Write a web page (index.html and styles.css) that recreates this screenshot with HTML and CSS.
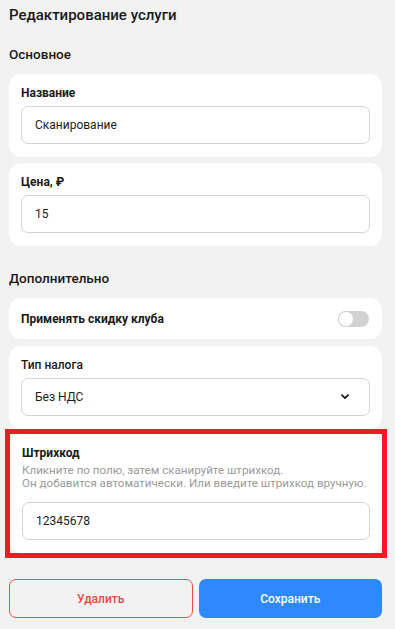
FILE: index.html
```html
<!DOCTYPE html>
<html lang="ru">
<head>
<meta charset="utf-8">
<title>Редактирование услуги</title>
<link rel="stylesheet" href="styles.css">
</head>
<body>
<div class="page">
  <h1 class="title">Редактирование услуги</h1>

  <h2 class="section">Основное</h2>
  <div class="cards">
    <div class="card">
      <div class="label">Название</div>
      <div class="field">Сканирование</div>
    </div>
    <div class="card">
      <div class="label">Цена, ₽</div>
      <div class="field">15</div>
    </div>
  </div>

  <h2 class="section section-2">Дополнительно</h2>
  <div class="cards">
    <div class="card card-row">
      <div class="label label-inline">Применять скидку клуба</div>
      <div class="toggle"><span class="knob"></span></div>
    </div>
    <div class="card card-4">
      <div class="label label-medium">Тип налога</div>
      <div class="field field-select">
        <span>Без НДС</span>
        <svg class="chevron" width="8" height="6" viewBox="0 0 8 6"><path d="M1 1.2 L4 4.2 L7 1.2" fill="none" stroke="#1a1a1a" stroke-width="1.8" stroke-linecap="round" stroke-linejoin="round"/></svg>
      </div>
    </div>
    <div class="highlight">
      <div class="card">
        <div class="label">Штрихкод</div>
        <div class="hint">Кликните по полю, затем сканируйте штрихкод.<br>Он добавится автоматически. Или введите штрихкод вручную.</div>
        <div class="field field-barcode">12345678</div>
      </div>
    </div>
  </div>

  <div class="actions">
    <button class="btn btn-delete">Удалить</button>
    <button class="btn btn-save">Сохранить</button>
  </div>
</div>
</body>
</html>
```

FILE: styles.css
```css
* { box-sizing: border-box; }
html, body { margin: 0; padding: 0; }
body {
  background: #f2f2f2;
  font-family: Roboto, "Noto Sans", sans-serif;
  color: #1a1a1a;
}
.page {
  padding: 5px 13px 0 9px;
}
.title {
  margin: 0;
  font-size: 15px;
  line-height: 20px;
  font-weight: 500;
}
.section {
  margin: 19px 0 10px;
  font-size: 13.5px;
  line-height: 20px;
  font-weight: 500;
}
.section-2 { margin-top: 22px; }
.cards {
  display: flex;
  flex-direction: column;
  gap: 6px;
}
.card {
  background: #fff;
  border-radius: 12px;
  padding: 11px 12px 13px;
}
.card-row {
  display: flex;
  align-items: center;
  justify-content: space-between;
  height: 41px;
  padding: 0 13px 0 12px;
  margin-bottom: 1px;
}
.label {
  font-size: 12px;
  line-height: 16px;
  font-weight: 700;
  margin-bottom: 5px;
}
.label-inline { margin-bottom: 0; margin-top: 1px; }
.label-medium { font-weight: 500; }
.field {
  height: 38px;
  border: 1px solid #d4d4d4;
  border-radius: 7px;
  padding: 0 13px;
  display: flex;
  align-items: center;
  font-size: 12px;
  color: #1c1c1c;
}
.field-select {
  justify-content: space-between;
  padding-right: 20px;
}
.chevron { display: block; }
.toggle {
  width: 31px;
  height: 16px;
  border-radius: 8px;
  background: #d2d2d2;
  position: relative;
}
.knob {
  position: absolute;
  left: 0;
  top: 0;
  width: 16px;
  height: 16px;
  border-radius: 50%;
  background: #fff;
  border: 1px solid #d2d2d2;
}
.highlight {
  border: 5px solid #ec1c24;
  margin: -6px -5px -5px -4px;
}
.hint {
  margin-top: -2px;
  font-size: 11.6px;
  line-height: 13px;
  color: #9a9a9a;
  white-space: nowrap;
}
.field-barcode { margin-top: 12px; }
.actions {
  margin-top: 26px;
  display: grid;
  grid-template-columns: 1fr 1fr;
  gap: 6px;
}
.btn {
  height: 39px;
  border-radius: 7px;
  font-family: Roboto, "Noto Sans", sans-serif;
  font-size: 12px;
  font-weight: 500;
  cursor: pointer;
}
.btn-delete {
  background: transparent;
  border: 1px solid #f34a4a;
  color: #f04646;
}
.btn-save {
  background: #2f88ff;
  border: none;
  color: #fff;
}
```
